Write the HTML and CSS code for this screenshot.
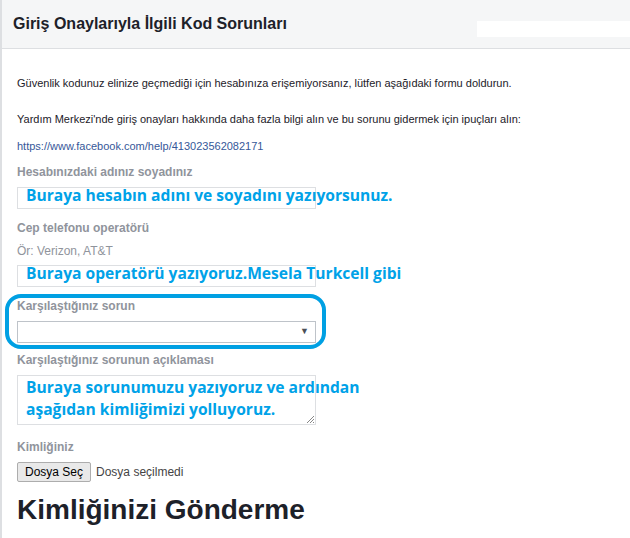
FILE: index.html
```html
<!DOCTYPE html>
<html lang="tr">
<head>
  <meta charset="UTF-8" />
  <title>Giriş Onaylarıyla İlgili Kod Sorunları</title>
  <link rel="stylesheet" href="styles.css">
</head>
<body>
  <div class="card">
    <div class="card-head">
      <h2>Giriş Onaylarıyla İlgili Kod Sorunları</h2>
      <span class="redact"></span>
    </div>
    <div class="card-body">
      <p class="intro">Güvenlik kodunuz elinize geçmediği için hesabınıza erişemiyorsanız, lütfen aşağıdaki formu doldurun.</p>
      <p class="intro">Yardım Merkezi'nde giriş onayları hakkında daha fazla bilgi alın ve bu sorunu gidermek için ipuçları alın:</p>
      <p class="link"><a href="#">https://www.facebook.com/help/413023562082171</a></p>

      <label class="lbl">Hesabınızdaki adınız soyadınız</label>
      <div class="box"><span class="note">Buraya hesabın adını ve soyadını yazıyorsunuz.</span></div>

      <label class="lbl">Cep telefonu operatörü</label>
      <div class="hint">Ör: Verizon, AT&amp;T</div>
      <div class="box"><span class="note">Buraya operatörü yazıyoruz.Mesela Turkcell gibi</span></div>

      <div class="circled">
        <label class="lbl">Karşılaştığınız sorun</label>
        <div class="box select"><span class="arrow">▼</span></div>
        <span class="ring"></span>
      </div>

      <label class="lbl">Karşılaştığınız sorunun açıklaması</label>
      <div class="box area">
        <span class="note">Buraya sorunumuzu yazıyoruz ve ardından<br>aşağıdan kimliğimizi yolluyoruz.</span>
        <svg class="grip" width="10" height="10" viewBox="0 0 10 10"><path d="M9 2L2 9M9 5L5 9M9 8L8 9" stroke="#888" stroke-width="1"/></svg>
      </div>

      <label class="lbl">Kimliğiniz</label>
      <div class="file"><span class="file-btn">Dosya Seç</span><span class="file-name">Dosya seçilmedi</span></div>

      <h1>Kimliğinizi Gönderme</h1>
    </div>
  </div>
</body>
</html>
```

FILE: styles.css
```css
body { margin: 0; background: #fff; font-family: "Liberation Sans", Arial, sans-serif; }
.card { border-left: 2px solid #dddfe2; min-height: 538px; }
.card-head { position: relative; height: 48px; background: #f5f6f7; border-bottom: 1px solid #dddfe2; display: flex; align-items: center; padding-left: 11px; }
.card-head h2 { margin: 0; font-size: 16px; font-weight: bold; color: #1d2129; }
.redact { position: absolute; left: 475px; top: 21px; right: 0; height: 16px; background: #fff; }
.card-body { padding: 17px 15px 0; font-size: 11px; color: #1d2129; }
.intro { margin: 10px 0 22px; line-height: 14px; }
.intro + .intro { margin-bottom: 13px; }
.link { margin: 0 0 11px; line-height: 14px; }
.link a { color: #365899; text-decoration: none; }
.lbl { display: block; font-size: 12px; font-weight: bold; color: #90949c; line-height: 16px; margin-bottom: 7px; }
.hint { font-size: 12px; color: #90949c; line-height: 16px; margin: 5px 0 6px; }
.box { position: relative; width: 297px; height: 20px; border: 1px solid #dddfe2; margin-bottom: 11px; }
.note { position: relative; left: 8px; top: -3px; white-space: nowrap; font-family: "Open Sans", sans-serif; font-weight: bold; font-size: 15.6px; color: #00a2e8; line-height: 20px; }
.circled { position: relative; }
.select { border-color: #bec3c9; margin-bottom: 9px; }
.arrow { position: absolute; right: 6px; top: 4px; font-size: 9px; color: #4b4f56; }
.ring { position: absolute; left: -12px; top: -4px; width: 313px; height: 47px; border: 4px solid #00a0e3; border-radius: 16px; }
.area { height: 48px; margin-bottom: 14px; }
.area .note { display: block; top: 0; line-height: 22px; }
.grip { position: absolute; right: 0; bottom: 0; }
.file { display: flex; align-items: center; gap: 5px; }
.file-btn { font-size: 12px; line-height: 16px; color: #000; background: #e9e9e9; border: 1px solid #adadad; border-radius: 2px; padding: 1px 7px; }
.file-name { font-size: 12px; color: #444; }
h1 { margin: 12px 0 0; font-size: 28px; font-weight: bold; color: #1d2129; }
```
